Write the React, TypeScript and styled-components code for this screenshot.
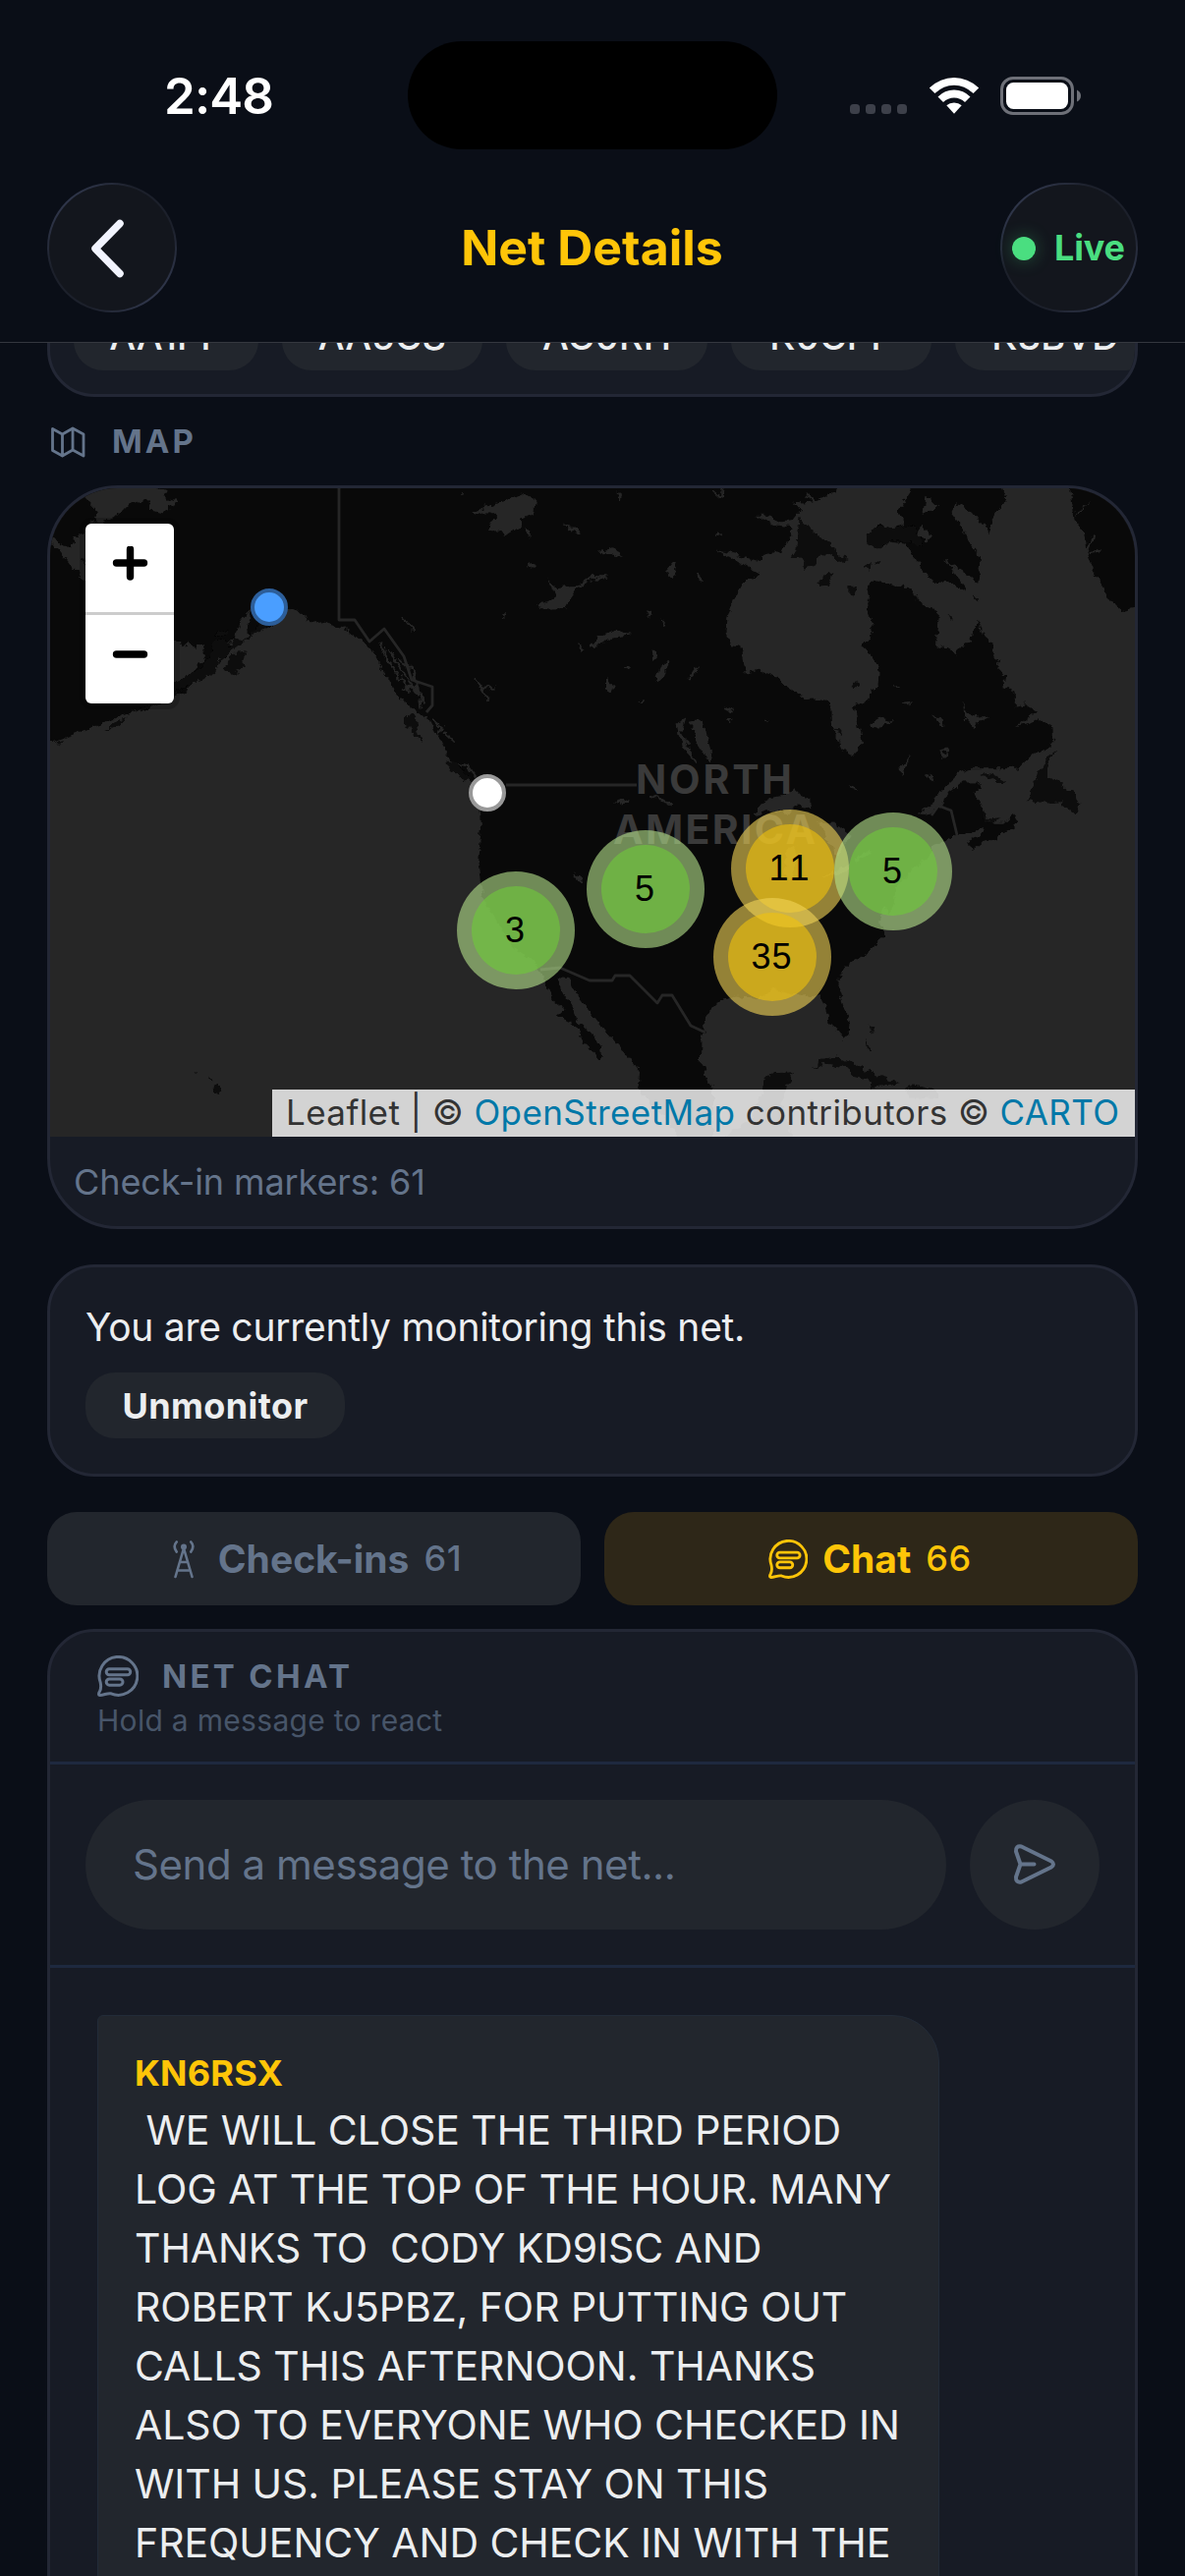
import React from "react";
import styled, { createGlobalStyle } from "styled-components";

const color = {
  page: "#0a0e17",
  card: "#171b25",
  border: "#232735",
  fill: "#22262d",
  slate: "#64748b",
  slateDark: "#475569",
  text: "#eceef0",
  gold: "#ffc508",
  green: "#4ade80",
  divider: "#1e293f",
};

const Global = createGlobalStyle`
  * { box-sizing: border-box; }
  html, body { margin: 0; padding: 0; background: ${color.page}; }
  body { font-family: Inter, "Liberation Sans", sans-serif; }
`;

const Screen = styled.div`
  width: 1206px;
  height: 2622px;
  overflow: hidden;
  display: flex;
  flex-direction: column;
  background: ${color.page};
`;

const Text = styled.span<{ $size: number; $weight?: number; $color?: string; $track?: number }>`
  font-size: ${(p) => p.$size}px;
  font-weight: ${(p) => p.$weight ?? 400};
  color: ${(p) => p.$color ?? color.text};
  letter-spacing: ${(p) => p.$track ?? 0}px;
  line-height: 1.2;
  white-space: pre;
`;

/* ---------- status bar ---------- */
const StatusBar = styled.div`
  height: 186px;
  flex: none;
  display: grid;
  grid-template-columns: 415px 376px 415px;
  align-items: start;
`;
const Clock = styled.div`
  padding: 67px 0 0 167px;
`;
const Island = styled.div`
  height: 110px;
  margin-top: 42px;
  border-radius: 55px;
  background: #000;
`;
const StatusIcons = styled.div`
  display: flex;
  padding: 76px 0 0 74px;
`;

/* ---------- header ---------- */
const Header = styled.header`
  height: 163px;
  flex: none;
  display: flex;
  align-items: flex-start;
  justify-content: space-between;
  padding: 0 48px;
  border-bottom: 1px solid #34373f;
`;
const RoundButton = styled.div<{ $wide?: boolean }>`
  width: ${(p) => (p.$wide ? 140 : 132)}px;
  height: 132px;
  border-radius: 66px;
  border: 2px solid transparent;
  background: linear-gradient(#13161d, #13161d) padding-box,
    linear-gradient(135deg, #333a50 10%, #1c202b 35%, #1c202b 65%, #333a50 90%) border-box;
  display: flex;
  align-items: center;
  ${(p) => (p.$wide ? "padding: 2px 0 0 10px; gap: 19px;" : "padding-left: 42px;")}
`;
const Title = styled.h1`
  margin: 0;
  padding: 36px 0 0 7px;
  font-size: 50px;
  line-height: 60px;
  font-weight: 700;
  letter-spacing: 0;
  color: ${color.gold};
`;
const LiveDot = styled.i`
  width: 24px;
  height: 24px;
  flex: none;
  border-radius: 50%;
  background: ${color.green};
  box-shadow: 0 0 18px rgba(74, 222, 128, 0.3);
`;

/* ---------- scrolled content ---------- */
const Content = styled.main`
  flex: 1;
  min-height: 0;
  overflow: hidden;
  display: flex;
  flex-direction: column;
  padding: 0 48px;
`;
const Card = styled.section<{ $radius: number }>`
  border: 3px solid ${color.border};
  border-radius: ${(p) => p.$radius}px;
  background: ${color.card};
  overflow: hidden;
  flex: none;
`;
const ChipCard = styled(Card)`
  height: 155px;
  margin-top: -100px;
  display: flex;
  align-items: flex-end;
  gap: 24px;
  padding: 0 0 24px 24px;
`;
const Chip = styled.div<{ $w: number }>`
  width: ${(p) => p.$w}px;
  height: 69px;
  flex: none;
  border-radius: 30px;
  background: ${color.fill};
  display: flex;
  align-items: center;
  justify-content: center;
`;
const SectionLabel = styled.div`
  height: 90px;
  flex: none;
  display: flex;
  align-items: center;
  gap: 26px;
  padding: 1px 0 0 3px;
`;
const MapCard = styled(Card)`
  height: 757px;
`;
const MapView = styled.div`
  position: relative;
  height: 660px;
  background: #262626;
  overflow: hidden;
`;
const Terrain = styled.svg`
  display: block;
`;
const MapCaption = styled.div`
  padding: 25px 0 0 24px;
`;
const ZoomControl = styled.div`
  position: absolute;
  left: 36px;
  top: 36px;
  width: 90px;
  border-radius: 6px;
  background: #fff;
  box-shadow: 0 0 0 6px rgba(0, 0, 0, 0.2);
`;
const ZoomKey = styled.div`
  height: 90px;
  display: grid;
  place-items: center;
  padding-bottom: 5px;
  & + & {
    height: 93px;
    border-top: 3px solid #ccc;
  }
`;
const Pin = styled.div<{ $x: number; $y: number; $fill: string; $ring: string }>`
  position: absolute;
  left: ${(p) => p.$x - 19}px;
  top: ${(p) => p.$y - 19}px;
  width: 38px;
  height: 38px;
  border-radius: 50%;
  background: ${(p) => p.$fill};
  border: 4px solid ${(p) => p.$ring};
`;
const Cluster = styled.div<{ $x: number; $y: number; $large?: boolean }>`
  position: absolute;
  left: ${(p) => p.$x - 60}px;
  top: ${(p) => p.$y - 60}px;
  width: 120px;
  height: 120px;
  padding: 15px;
  border-radius: 50%;
  background: ${(p) => (p.$large ? "rgba(241,211,87,.6)" : "rgba(181,226,140,.6)")};
  & > div {
    height: 90px;
    border-radius: 50%;
    background: ${(p) => (p.$large ? "rgba(240,194,12,.6)" : "rgba(110,204,57,.6)")};
    font: 36px/90px "Liberation Sans", Arial, sans-serif;
    font-kerning: none;
    letter-spacing: 1px;
    text-align: center;
    color: #000;
    padding-right: 1px;
  }
`;
const Attribution = styled.div`
  position: absolute;
  right: 0;
  bottom: 0;
  width: 878px;
  height: 48px;
  padding-left: 14px;
  background: rgba(255, 255, 255, 0.8);
  color: #333;
  font-size: 35px;
  line-height: 46px;
  letter-spacing: 0.4px;
  white-space: nowrap;
  a { color: #0078a8; }
`;

const MonitorCard = styled(Card)`
  height: 216px;
  margin-top: 36px;
  padding: 38px 36px 35px;
  display: flex;
  flex-direction: column;
  align-items: flex-start;
`;
const PillButton = styled.div`
  width: 264px;
  height: 67px;
  margin-top: 22px;
  padding-top: 2px;
  border-radius: 30px;
  background: ${color.fill};
  display: flex;
  align-items: center;
  justify-content: center;
`;
const Tabs = styled.div`
  flex: none;
  display: grid;
  grid-template-columns: 1fr 1fr;
  gap: 24px;
  margin: 36px 0 24px;
`;
const Tab = styled.div<{ $active?: boolean }>`
  height: 95px;
  border-radius: 30px;
  background: ${(p) => (p.$active ? "#2e2718" : color.fill)};
  color: ${(p) => (p.$active ? color.gold : color.slate)};
  display: flex;
  align-items: center;
  justify-content: center;
  gap: 15px;
  padding: 1px 2px 0 0;
`;
const ChatCard = styled(Card)`
  height: 1100px;
  display: flex;
  flex-direction: column;
`;
const ChatHead = styled.div`
  height: 135px;
  flex: none;
  display: flex;
  flex-direction: column;
  gap: 6px;
  padding: 24px 48px;
  border-bottom: 3px solid ${color.divider};
`;
const ChatTitle = styled.div`
  height: 43px;
  display: flex;
  align-items: center;
  gap: 24px;
  color: ${color.slate};
  & > span { padding-top: 2px; }
`;
const Composer = styled.div`
  height: 207px;
  flex: none;
  display: flex;
  gap: 24px;
  padding: 36px;
  border-bottom: 3px solid ${color.divider};
`;
const Field = styled.div`
  flex: 1;
  height: 132px;
  border-radius: 66px;
  background: ${color.fill};
  display: flex;
  align-items: center;
  padding-left: 48px;
`;
const Send = styled.div`
  width: 132px;
  height: 132px;
  border-radius: 50%;
  background: ${color.fill};
  display: grid;
  place-items: center;
`;
const Bubble = styled.article`
  width: 857px;
  flex: 1;
  margin: 48px 0 0 48px;
  padding: 37px 0 0 37px;
  border: 1px solid #222b38;
  border-radius: 6px 48px 0 0;
  background: ${color.fill};
`;
const Message = styled.p`
  margin: 6px 0 0;
  font-size: 41px;
  line-height: 60px;
  letter-spacing: -0.06px;
  color: ${color.text};
  white-space: pre;
`;

const ChatIcon = ({ size }: { size: number }) => (
  <svg width={size} height={size} viewBox="0 0 42 42" fill="none" stroke="currentColor" strokeWidth="3" strokeLinejoin="round" strokeLinecap="round">
    <path d="M3.2 27.500A19.400 19.400 0 1 1 14 38.800C10.500 37.900 6.500 40.500 2.700 40.400C1 40.300 1.300 38.500 2.500 36.500C3.900 34 3.900 31 3.200 27.500Z" />
    <rect x="9.200" y="13.800" width="24.500" height="6" rx="3" />
    <rect x="9.200" y="24" width="16.800" height="6.200" rx="3.100" />
  </svg>
);

const AntennaIcon = () => (
  <svg width="40" height="40" viewBox="-9 0 40 40" fill="none" stroke="currentColor" strokeWidth="2.600" strokeLinecap="round">
    <circle cx="11" cy="7.500" r="3" fill="currentColor" stroke="none" />
    <path d="M11 9L2.500 38M11 9L19.500 38M7.200 23H14.800M5 31.500H17M3.800 2.400Q-.6 7 3.800 12.600M18.200 2.400Q22.600 7 18.200 12.600" />
  </svg>
);

const WifiIcon = () => (
  <svg width="52" height="40" viewBox="0 0 52 40">
    <g fill="#fff">
      <path d="M.8 13.500Q12 3 26 3T51.200 13.500L45.600 19Q36.500 10.700 26 10.700T6.400 19Z" />
      <path d="M9.500 22.500Q16.500 15.500 26 15.500T42.500 22.500L37 28Q32.300 23.500 26 23.500T15 28Z" />
      <path d="M18.300 31.300Q21.500 28.400 26 28.400T33.700 31.300L26 39.800Z" />
    </g>
  </svg>
);

/* Coastlines are digitised in two tiles that sit side by side; jaggedness is added by a displacement filter. */
const PACIFIC =
  "M20 154L45 160L60 172L85 178L95 152L108 155L125 125L170 112L180 300L250 420L356 400L372 402L385 414L400 398L412 412L440 403L426 425L442 432L435 448L418 450L405 475L380 490L358 512L300 545L265 560L20 640V1570H1700L1640 1500L1584 1450L1589 1410L1560 1375L1500 1315L1464 1275L1425 1235L1400 1190L1372 1188L1380 1215L1400 1240L1415 1262L1425 1290L1460 1322L1480 1345L1492 1372L1482 1380L1455 1352L1435 1330L1430 1308L1400 1290L1370 1277L1390 1262L1365 1245L1345 1210L1325 1170L1310 1150L1262 1122L1240 1100L1215 1060L1195 1030L1175 1000L1168 970L1160 910L1170 840L1168 800L1150 735L1125 712L1088 680L1075 650L1045 610L1030 585L1000 565L960 540L930 500L905 460L885 425L850 395L820 375L790 362L755 352L725 357L700 342L680 325L655 315L640 340L610 365L580 372L555 388L550 360L560 318L535 350L515 390L495 405L520 410L470 450L440 470L415 488L390 510L358 527L300 552L265 563L358 512Z";
const ATLANTIC =
  "M320 1570V1450L300 1420L288 1390L290 1330L298 1310L295 1275L320 1255L350 1240L380 1230L430 1238L480 1215L530 1228L560 1235L600 1225L620 1260L625 1295L650 1315L665 1332L678 1315L680 1290L665 1255L650 1215L652 1190L670 1165L700 1145L735 1125L755 1105L775 1088L762 1060L770 1020L790 1040L800 980L850 930L890 905L900 880L970 852L1000 843L1035 835L1025 855L988 868L1003 890L1030 870L1080 855L1128 825L1115 805L1090 825L1060 825L1035 800L1025 770L1010 755L1030 742L1020 730L980 730L940 755L915 790L880 805L865 803L905 775L930 740L965 710L1000 697L1090 697L1130 695L1160 670L1200 650L1220 635L1218 600L1190 582L1118 600L1175 562L1150 545L1120 550L1120 520L1090 505L1095 480L1070 455L1080 440L1055 425L1060 405L1035 385L1022 348L1005 380L1000 400L980 410L960 430L935 415L905 405L912 370L915 325L870 315L855 290L825 262L800 270L760 258L735 255L725 270L735 300L725 325L735 345L742 370L735 390L716 410L745 435L758 470L755 505L725 535L693 553L700 580L705 605L715 635L690 668L665 655L650 630L635 610L632 540L605 533L568 535L515 505L485 480L435 465L405 472L390 410L365 405L355 380L357 340L375 300L400 260L445 240L405 220L325 183L445 212L462 190L500 190L525 140L530 130L480 125L430 103L465 103L500 118L530 115L552 90L535 73L560 75L600 65L640 50L655 30H855L808 92L825 122L775 135L760 128L725 150L735 175L765 178L785 165L830 170L850 200L870 230L900 257L940 262L990 282L985 265L930 205L960 225L1000 250L1020 260L1027 200L1005 180L985 140L945 95L960 75L1010 100L1050 145L1060 110L1095 65L1085 40L1060 30H1262L1270 75L1275 110L1300 140L1305 180L1325 230L1350 270L1370 300L1400 325L1450 318V1570Z";

const MapTerrain = () => (
  <Terrain width="1104" height="660" viewBox="51 497 1104 660">
    <defs>
      <filter id="coast" x="0" y="0" width="100%" height="100%">
        <feTurbulence type="fractalNoise" baseFrequency="0.12" numOctaves="3" seed="4" />
        <feDisplacementMap in="SourceGraphic" scale="9" xChannelSelector="R" yChannelSelector="G" />
      </filter>
    </defs>
    <rect x="51" y="497" width="1104" height="660" fill="#090909" />
    <g filter="url(#coast)">
      <g transform="translate(40 480) scale(.38462 .43366)" fill="#262626">
        <path d={PACIFIC} />
        <path d="M120 62L155 95L140 110L165 118L215 98L240 75L290 65L300 90L330 95L345 80L368 72L330 60L340 45L290 30H130Z" />
        <path d="M1145 92L1230 70L1275 50L1302 58L1312 70L1308 100L1275 112L1270 128L1230 152L1220 140L1185 138L1192 122L1215 112L1195 98L1150 98Z" />
        <path d="M1285 132L1298 138L1296 156L1287 150ZM1290 210L1318 222L1308 230L1290 220ZM1345 250L1370 275L1400 268L1430 268L1405 300L1392 320L1350 322L1312 315L1345 305L1370 292Z" />
        <path d="M1382 118L1400 130L1425 130L1432 145L1400 136ZM1475 190L1515 180L1540 188L1538 200L1500 192ZM1428 405L1442 415L1434 425ZM1455 412L1480 390L1520 375L1568 383L1510 392L1480 408ZM1500 485L1520 500L1515 518L1500 510ZM1225 340L1235 332L1230 345ZM1120 45L1126 55L1118 62ZM1412 942L1432 950L1436 965L1420 960Z" />
        <g fill="none" stroke="#262626" strokeWidth="5.500">
          <path d="M965 345L990 375M1152 485L1190 532M1170 510L1205 505M1395 290L1440 260L1470 245L1500 247M905 400L920 440L950 480L980 520M925 410L945 450L985 500L1020 545M950 440L990 470L1000 520M960 510L1000 500L1010 550M1040 580L1065 600L1050 625M1070 610L1100 635M1520 780L1560 770M1075 680L1110 688L1135 695L1155 718" />
        </g>
        <g fill="#090909">
          <path d="M490 460L510 430L548 425L535 445L540 460L505 478ZM460 382L500 372L498 382L465 388ZM468 440L515 405L510 390L540 395L560 380L600 350L635 350L560 385L530 405L450 460ZM400 480L450 440L455 410L480 395L510 400L465 470L420 495ZM356 500L420 465L470 440L415 490L356 522ZM265 555L300 545L270 563ZM175 610L195 592L230 578L215 597L195 600ZM35 638L60 632L55 640ZM82 340L98 345ZM108 207L122 207V220ZM970 572L995 575L1000 605L1012 637L985 610L970 588ZM1076 682L1105 683L1142 720L1130 728L1090 704ZM457 1440L470 1438L486 1452L468 1463ZM410 1409L422 1413L415 1416ZM445 1424L460 1427L455 1430Z" />
        </g>
      </g>
      <g transform="translate(603 480) scale(.38462 .43366)" fill="#262626">
        <path d={ATLANTIC} />
        <path d="M880 55L918 82L905 95L875 98ZM870 125L895 155L885 160L860 155ZM1275 110L1320 66L1290 90ZM192 235L215 212L222 220L212 250ZM275 240L295 258L280 256ZM30 185L55 178L80 200L60 198ZM58 45L75 50L72 72ZM140 320L155 335L148 345ZM180 340L196 360L190 362ZM165 495L180 460L200 435L204 442L192 470L180 490ZM155 420L175 430L160 445ZM250 485L280 452L278 468L258 485ZM82 460L102 452L95 465ZM38 485L60 500L52 520L42 510ZM120 540L138 537L130 545ZM0 408L20 383L60 378L103 387L50 390L20 402Z" />
        <path d="M258 585L275 582L292 592L300 620L318 665L308 680L292 660L270 615ZM222 590L245 580L235 610L250 640L270 670L280 690L250 660L230 625ZM350 560L372 550L362 565ZM350 580L372 578L360 586ZM452 583L468 584L460 588ZM735 590L760 578L800 585L765 596L755 606L745 598ZM820 542L852 538L830 548ZM900 570L930 580L932 605L918 590ZM980 540L990 570L1020 578L1055 575L1015 590L1010 605L985 580ZM812 695L840 668L830 690L815 710ZM800 500L815 505L805 508Z" />
        <path d="M420 808L440 785L480 765L510 760L530 745L545 758L575 770L578 790L545 785L515 800L480 795L450 802ZM510 900L520 880L540 880L535 940L520 965L510 940ZM595 822L640 825L685 855L665 870L650 905L628 880L615 850ZM608 950L640 940L680 920L675 935L630 950ZM690 905L730 890L735 900L700 912Z" />
        <g fill="none" stroke="#262626" strokeWidth="5">
          <path d="M1305 190L1325 150M1312 190L1345 185M570 55L600 80M550 90L600 125M575 110L610 125M320 45L340 60L342 40M325 150L340 145M60 780L98 768M150 762L205 778M680 740L698 745M885 715L905 720M920 655L935 650L940 665L928 670L922 658M0 245L38 245M10 255L30 250M1135 590L1175 575" />
        </g>
        <g fill="#090909">
          <path d="M550 110L575 135L600 150L640 178L645 192L672 205L660 212L628 195L605 190L590 215L565 230L552 205L522 205L540 180L542 140ZM725 150L742 130L775 135L800 128L850 125L870 170L830 165L790 160L775 175L745 180L727 170ZM597 262L610 242L638 238L625 262L605 270ZM680 268L697 265L692 292L680 288ZM715 220L735 215L732 230ZM742 208L755 210L750 218ZM1005 292L1022 295L1018 305ZM940 340L952 340L945 350ZM685 505L700 488L705 498L695 515ZM635 605L660 608L665 618L640 612Z" />
          <path d="M1225 655L1205 690L1200 720L1230 725L1255 745L1275 745L1290 780L1275 802L1240 775L1200 778L1145 770L1165 745L1185 700L1200 670ZM1028 708L1060 712L1090 728L1060 728ZM1030 800L1050 815L1080 812L1060 822L1035 815Z" />
          <path d="M580 1402L610 1380L650 1376L695 1386L720 1405L760 1418L810 1437L740 1445L730 1425L690 1415L665 1398L620 1390ZM830 1450L850 1440L910 1450V1470H840ZM720 1330L738 1362L728 1355ZM730 1295L748 1303L740 1315ZM450 1450L455 1422L480 1412L530 1410L515 1440L500 1480L530 1570H330L420 1520Z" />
        </g>
      </g>
    </g>
    <g fill="none" stroke="#262626" strokeWidth="2.800" strokeLinejoin="round">
      <path d="M345 497V631H361L376 653L391 640L411 668L419 692L440 699V718L434 725M515 799H648M550 987L570 985L600 998H623L626 993H641L669 1021L674 1013H684L703 1044L718 1051M948 830L955 820L968 825L974 850" />
    </g>
    <g fill="#3a3a3a" fontFamily="Inter, sans-serif" fontWeight="700" fontSize="41">
      <text x="647" y="808" textLength="159">NORTH</text>
      <text x="624" y="859" textLength="206">AMERICA</text>
    </g>
  </Terrain>
);

const message = [
  " WE WILL CLOSE THE THIRD PERIOD",
  "LOG AT THE TOP OF THE HOUR. MANY",
  "THANKS TO  CODY KD9ISC AND",
  "ROBERT KJ5PBZ, FOR PUTTING OUT",
  "CALLS THIS AFTERNOON. THANKS",
  "ALSO TO EVERYONE WHO CHECKED IN",
  "WITH US. PLEASE STAY ON THIS",
  "FREQUENCY AND CHECK IN WITH THE",
].join("\n");

const chips: [string, number][] = [
  ["AA1PF", 188],
  ["AA5CS", 204],
  ["AC0RH", 205],
  ["K0CPF", 204],
  ["K3BVD", 204],
];

export default function App() {
  return (
    <Screen>
      <Global />
      <StatusBar>
        <Clock>
          <Text $size={51} $weight={600} $color="#fff" $track={-0.9}>2:48</Text>
        </Clock>
        <Island />
        <StatusIcons>
          <svg width="80" height="42" viewBox="0 0 80 42" fill="#3d404a">
            {[0, 16, 32, 48].map((x) => (
              <rect key={x} x={x} y="30" width="10" height="10" rx="3.500" />
            ))}
          </svg>
          <WifiIcon />
          <svg width="106" height="42" viewBox="0 0 106 42">
            <rect x="22.500" y="3.500" width="72" height="36" rx="11.500" fill="none" stroke="#6e7078" strokeWidth="3" />
            <rect x="27" y="8" width="63" height="27" rx="7.500" fill="#fff" />
            <path d="M99 15.500Q103 17.500 103 21.500T99 27.500Z" fill="#6e7078" />
          </svg>
        </StatusIcons>
      </StatusBar>
      <Header>
        <RoundButton>
          <svg width="40" height="64" viewBox="0 0 40 64" fill="none" stroke="#f1f3fd" strokeWidth="7.500" strokeLinecap="round" strokeLinejoin="round">
            <path d="M30 7.500L5 33L30 58.500" />
          </svg>
        </RoundButton>
        <Title>Net Details</Title>
        <RoundButton $wide>
          <LiveDot />
          <Text $size={36} $weight={700} $color={color.green} $track={-0.2}>Live</Text>
        </RoundButton>
      </Header>
      <Content>
        <ChipCard $radius={48}>
          {chips.map(([call, w]) => (
            <Chip key={call} $w={w}>
              <Text $size={38} $weight={500}>{call}</Text>
            </Chip>
          ))}
        </ChipCard>
        <SectionLabel>
          <svg width="37" height="34" viewBox="0 0 37 34" fill="none" stroke={color.slate} strokeWidth="2.800" strokeLinejoin="round">
            <path d="M2.500 3.500V25.500L12.500 31L23 25L34 31V9L23 3L12.500 9ZM12.500 9V31M23 3V25" />
          </svg>
          <Text $size={33} $weight={700} $color={color.slate} $track={3}>MAP</Text>
        </SectionLabel>
        <MapCard $radius={72}>
          <MapView>
            <MapTerrain />
            <Pin $x={223} $y={121} $fill="#4a9eff" $ring="#2d5e99" />
            <Pin $x={445} $y={310} $fill="#fff" $ring="#999" />
            <Cluster $x={474} $y={450}><div>3</div></Cluster>
            <Cluster $x={606} $y={408}><div>5</div></Cluster>
            <Cluster $x={753} $y={387} $large><div>11</div></Cluster>
            <Cluster $x={858} $y={390}><div>5</div></Cluster>
            <Cluster $x={735} $y={477} $large><div>35</div></Cluster>
            <ZoomControl>
              <ZoomKey>
                <svg width="40" height="40" viewBox="0 0 40 40" stroke="#000" strokeWidth="7.400" strokeLinecap="round">
                  <path d="M6.500 17H34.500M20.500 3V31" />
                </svg>
              </ZoomKey>
              <ZoomKey>
                <svg width="40" height="40" viewBox="0 0 40 40" stroke="#000" strokeWidth="7.400" strokeLinecap="round">
                  <path d="M6.500 17H34.500" />
                </svg>
              </ZoomKey>
            </ZoomControl>
            <Attribution>
              Leaflet | © <a>OpenStreetMap</a> contributors © <a>CARTO</a>
            </Attribution>
          </MapView>
          <MapCaption>
            <Text $size={36} $color={color.slate} $track={-0.1}>Check-in markers: 61</Text>
          </MapCaption>
        </MapCard>
        <MonitorCard $radius={48}>
          <Text $size={39} $track={-0.27}>You are currently monitoring this net.</Text>
          <PillButton>
            <Text $size={36} $weight={700} $track={0.4}>Unmonitor</Text>
          </PillButton>
        </MonitorCard>
        <Tabs>
          <Tab>
            <AntennaIcon />
            <Text $size={39} $weight={700} $color="inherit">Check-ins</Text>
            <Text $size={36} $weight={500} $color="inherit" $track={0.6}>61</Text>
          </Tab>
          <Tab $active>
            <ChatIcon size={40} />
            <Text $size={39} $weight={700} $color="inherit">Chat</Text>
            <Text $size={36} $weight={500} $color="inherit" $track={0.6}>66</Text>
          </Tab>
        </Tabs>
        <ChatCard $radius={48}>
          <ChatHead>
            <ChatTitle>
              <ChatIcon size={42} />
              <Text $size={33} $weight={700} $color={color.slate} $track={3.3}>NET CHAT</Text>
            </ChatTitle>
            <Text $size={30} $color={color.slateDark} $track={0.3}>Hold a message to react</Text>
          </ChatHead>
          <Composer>
            <Field>
              <Text $size={42} $color={color.slate} $track={-0.45}>Send a message to the net...</Text>
            </Field>
            <Send>
              <svg width="44" height="44" viewBox="0 0 44 44" fill="none" stroke={color.slate} strokeWidth="4" strokeLinecap="round" strokeLinejoin="round">
                <path d="M8.500 3.500L39 18.500Q43 21.500 39 24.500L8.500 39.500Q2.500 40.500 3 34.500L7.500 21.500L3 8.500Q2.500 2.500 8.500 3.500ZM7.500 21.500H21.500" />
              </svg>
            </Send>
          </Composer>
          <Bubble>
            <Text $size={36} $weight={700} $color={color.gold} $track={0.2}>KN6RSX</Text>
            <Message>{message}</Message>
          </Bubble>
        </ChatCard>
      </Content>
    </Screen>
  );
}
